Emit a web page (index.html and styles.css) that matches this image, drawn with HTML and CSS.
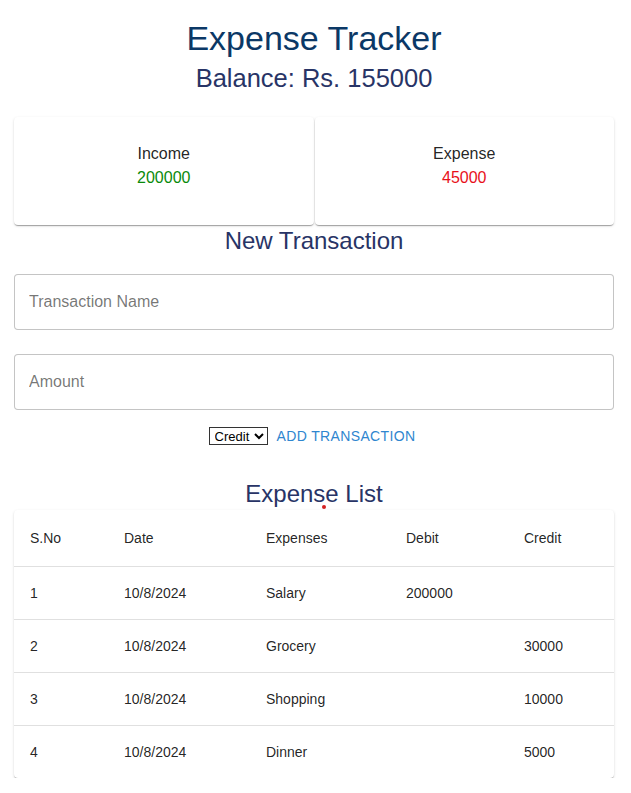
FILE: index.html
```html
<!DOCTYPE html>
<html>
<head>
<meta charset="utf-8">
<link rel="stylesheet" href="styles.css">
</head>
<body>
<div class="app">
  <h1 class="title">Expense Tracker</h1>
  <h2 class="balance">Balance: Rs. 155000</h2>
  <div class="cards">
    <div class="card">
      <div class="card-label">Income</div>
      <div class="card-value income">200000</div>
    </div>
    <div class="card">
      <div class="card-label">Expense</div>
      <div class="card-value expense">45000</div>
    </div>
  </div>
  <h2 class="section">New Transaction</h2>
  <div class="field"><input class="input" type="text" placeholder="Transaction Name"></div>
  <div class="field"><input class="input" type="text" placeholder="Amount"></div>
  <div class="actions">
    <select class="type-select"><option>Credit</option><option>Debit</option></select>
    <button class="add-btn">Add Transaction</button>
  </div>
  <h2 class="section list-title">Expense List<span class="dot"></span></h2>
  <div class="table-paper">
    <table class="table">
      <thead>
        <tr><th class="c1">S.No</th><th class="c2">Date</th><th class="c3">Expenses</th><th class="c4">Debit</th><th class="c5">Credit</th></tr>
      </thead>
      <tbody>
        <tr><td>1</td><td>10/8/2024</td><td>Salary</td><td>200000</td><td></td></tr>
        <tr><td>2</td><td>10/8/2024</td><td>Grocery</td><td></td><td>30000</td></tr>
        <tr><td>3</td><td>10/8/2024</td><td>Shopping</td><td></td><td>10000</td></tr>
        <tr><td>4</td><td>10/8/2024</td><td>Dinner</td><td></td><td>5000</td></tr>
      </tbody>
    </table>
  </div>
</div>
</body>
</html>
```
FILE: styles.css
```css
* { box-sizing: border-box; }
body {
  margin: 0;
  background: #fff;
  font-family: "Liberation Sans", Arial, sans-serif;
  color: rgba(0,0,0,0.87);
}
.app {
  width: 600px;
  margin: 0 14px;
  padding-top: 16px;
  display: flex;
  flex-direction: column;
}
.title {
  margin: 0;
  font-weight: 400;
  font-size: 34px;
  line-height: 44px;
  text-align: center;
  color: #0b3866;
}
.balance {
  margin: 0;
  font-weight: 400;
  font-size: 25.5px;
  line-height: 36px;
  text-align: center;
  color: #283466;
}
.cards {
  display: flex;
  gap: 1px;
  margin-top: 21px;
}
.card {
  flex: 1;
  height: 108px;
  border-radius: 4px;
  background: #fff;
  box-shadow: 0px 2px 1px -1px rgba(0,0,0,0.2), 0px 1px 1px 0px rgba(0,0,0,0.14), 0px 1px 3px 0px rgba(0,0,0,0.12);
  padding-top: 25px;
  text-align: center;
}
.card-label {
  font-size: 16px;
  line-height: 24px;
  color: rgba(0,0,0,0.87);
}
.card-value {
  font-size: 16px;
  line-height: 24px;
}
.income { color: #0a8a0a; }
.expense { color: #e8101a; }
.section {
  margin: 4px 0 0;
  font-weight: 400;
  font-size: 24px;
  line-height: 24px;
  text-align: center;
  color: #283466;
}
.field { margin-top: 21px; }
.field + .field { margin-top: 24px; }
.input {
  display: block;
  width: 100%;
  height: 56px;
  border: 1px solid rgba(0,0,0,0.23);
  border-radius: 4px;
  padding: 0 14px;
  font-family: "Liberation Sans", Arial, sans-serif;
  font-size: 16px;
  color: rgba(0,0,0,0.87);
  background: #fff;
  outline: none;
}
.input::placeholder { color: rgba(0,0,0,0.55); opacity: 1; }
.actions {
  display: flex;
  justify-content: center;
  align-items: center;
  gap: 5px;
  margin-top: 8px;
  height: 36px;
}
.type-select {
  font-family: "Liberation Sans", Arial, sans-serif;
  font-size: 13px;
  height: 18px;
  border: 1px solid #333;
  border-radius: 0;
  background: #fff;
  color: #000;
  padding: 0 1px;
}
.add-btn {
  border: none;
  background: transparent;
  font-family: "Liberation Sans", Arial, sans-serif;
  font-size: 14px;
  font-weight: 400;
  letter-spacing: 0.35px;
  text-transform: uppercase;
  color: #2f86cf;
  padding: 6px 4px;
  line-height: 24px;
  cursor: pointer;
}
.list-title {
  margin-top: 28px;
  position: relative;
}
.dot {
  position: absolute;
  left: 308px;
  top: 23px;
  width: 4px;
  height: 4px;
  border-radius: 50%;
  background: #d42020;
}
.table-paper {
  margin-top: 4px;
  border-radius: 4px;
  background: #fff;
  box-shadow: 0px 2px 1px -1px rgba(0,0,0,0.2), 0px 1px 1px 0px rgba(0,0,0,0.14), 0px 1px 3px 0px rgba(0,0,0,0.12);
  overflow: hidden;
}
.table {
  width: 100%;
  border-collapse: collapse;
  table-layout: fixed;
}
.table th, .table td {
  text-align: left;
  font-size: 14px;
  font-weight: 400;
  padding: 16px;
  border-bottom: 1px solid rgba(224,224,224,1);
  color: rgba(0,0,0,0.87);
}
.table th { line-height: 24px; }
.table td { line-height: 20px; }
.table tbody tr:last-child td { border-bottom: none; }
.c1 { width: 94px; }
.c2 { width: 142px; }
.c3 { width: 140px; }
.c4 { width: 118px; }
.c5 { width: 106px; }
```
